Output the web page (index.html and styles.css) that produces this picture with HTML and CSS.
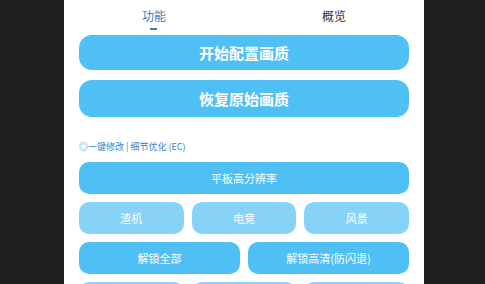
FILE: index.html
```html
<!DOCTYPE html>
<html lang="zh">
<head>
    <meta charset="UTF-8">
    <meta name="viewport" content="width=device-width, initial-scale=1.0">
    <title>画质助手</title>
    <link rel="stylesheet" href="styles.css">
</head>
<body>
    <div class="panel">
        <div class="tabs">
            <div class="tab active">功能<span class="bar"></span></div>
            <div class="tab">概览</div>
        </div>

        <button class="big-btn">开始配置画质</button>
        <button class="big-btn second">恢复原始画质</button>

        <div class="hint">◎一键修改 | 细节优化 (EC)</div>

        <button class="btn full">平板高分辨率</button>
        <div class="row three">
            <button class="btn light">渣机</button>
            <button class="btn light">电竞</button>
            <button class="btn light">风景</button>
        </div>
        <div class="row two">
            <button class="btn">解锁全部</button>
            <button class="btn">解锁高清(防闪退)</button>
        </div>
        <!-- next row is below the fold -->
        <div class="row three">
            <button class="btn light"></button>
            <button class="btn light"></button>
            <button class="btn light"></button>
        </div>
    </div>
</body>
</html>
```

FILE: styles.css
```css
body {
    margin: 0;
    padding: 0;
    background-color: #1f1f1f;
    font-family: "Noto Sans CJK SC", "Noto Sans", sans-serif;
    overflow: hidden;
}
.panel {
    width: 360px;
    margin-left: 64px;
    min-height: 300px;
    background: #ffffff;
    padding: 0 15px;
    box-sizing: border-box;
}
.tabs {
    display: flex;
    height: 35px;
    margin: 0 -15px;
}
.tab {
    flex: 1;
    position: relative;
    text-align: center;
    font-size: 12px;
    line-height: 16px;
    padding-top: 8px;
    color: #333333;
}
.tab.active {
    color: #3a7ec2;
}
.tab .bar {
    position: absolute;
    left: 50%;
    top: 28px;
    width: 7px;
    height: 2px;
    margin-left: -4px;
    background: #3a7ec2;
}
button {
    font-family: inherit;
    border: none;
    color: #ffffff;
    background-color: #4fc0f6;
    cursor: pointer;
    padding: 0;
}
.big-btn {
    display: block;
    width: 100%;
    height: 35px;
    border-radius: 13px;
    font-size: 15px;
    font-weight: bold;
}
.big-btn.second {
    margin-top: 10px;
    height: 37px;
}
.hint {
    margin-top: 22px;
    font-size: 9px;
    line-height: 16px;
    color: #2f86cf;
}
.btn {
    display: block;
    width: 100%;
    height: 32px;
    border-radius: 10px;
    font-size: 11px;
}
.btn.full {
    margin-top: 7px;
}
.btn.light {
    background-color: #87d3f8;
}
.row {
    display: grid;
    gap: 8px;
    margin-top: 8px;
}
.row.three {
    grid-template-columns: 1fr 1fr 1fr;
}
.row.two {
    grid-template-columns: 1fr 1fr;
}
```
